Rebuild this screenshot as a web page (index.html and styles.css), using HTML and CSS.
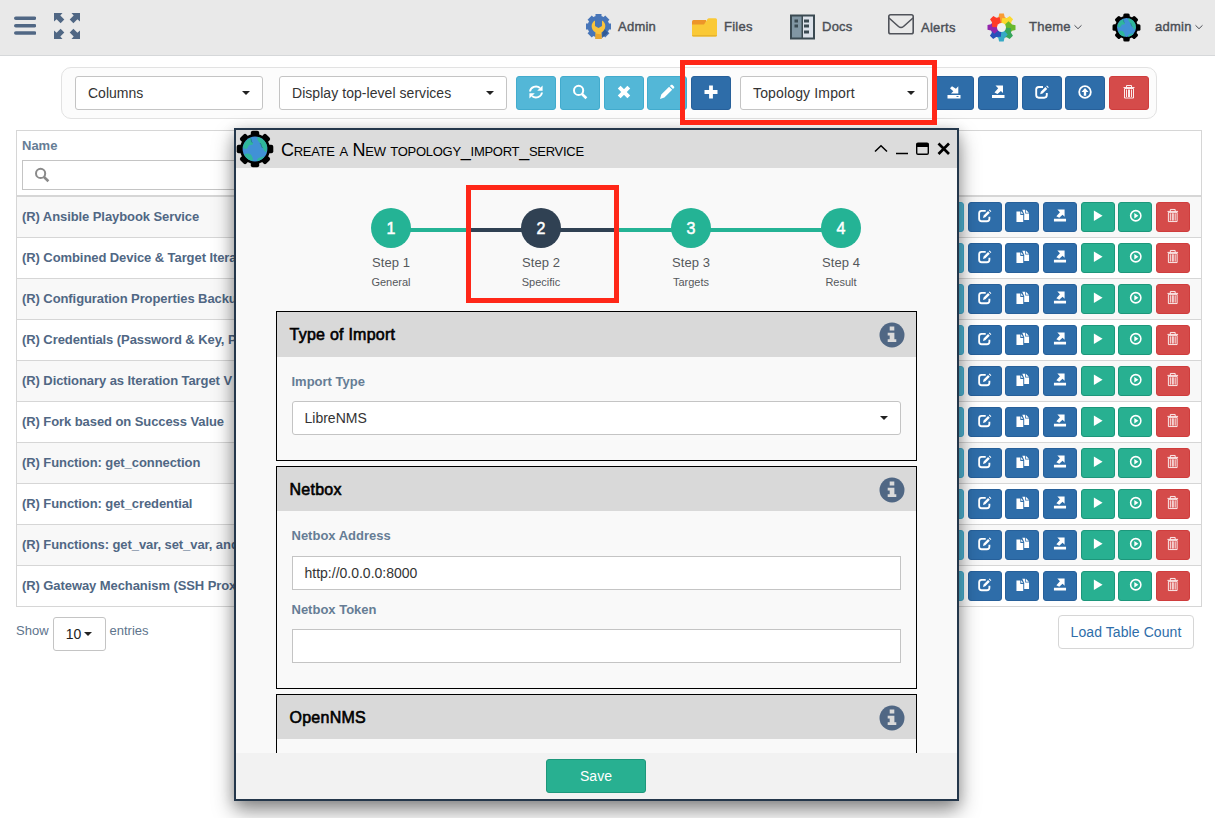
FILE: index.html
```
<!DOCTYPE html>
<html lang="en">
<head>
<meta charset="utf-8">
<title>Services</title>
<link rel="stylesheet" href="styles.css">
</head>
<body>
<svg class="defs" width="0" height="0">
  <symbol id="refresh" viewBox="0 0 16 16"><path d="M2 7.5A6 5.6 0 0 1 12 4M14 8.5A6 5.6 0 0 1 4 12" fill="none" stroke="currentColor" stroke-width="1.9"/><path d="M14.6 1.4v5.4H9.2zM1.4 14.6V9.2h5.4z" fill="currentColor"/></symbol>
  <symbol id="search" viewBox="0 0 16 16"><circle cx="6.6" cy="6.4" r="4.6" fill="none" stroke="currentColor" stroke-width="2"/><path d="M10 10l4.4 4.2" stroke="currentColor" stroke-width="2.6"/></symbol>
  <symbol id="remove" viewBox="0 0 16 16"><path d="M3.2 3.2l9.6 9.6M12.8 3.2l-9.6 9.6" stroke="currentColor" stroke-width="4"/></symbol>
  <symbol id="pencil" viewBox="0 0 16 16"><path d="M1 15l1.3-4.5 7.8-7.8 3.1 3.1-7.8 7.8zM10.9 2l1-1c.6-.5 1.2-.4 1.7 0l1.4 1.4c.5.5.5 1.1 0 1.7l-1 1z" fill="currentColor"/></symbol>
  <symbol id="plus" viewBox="0 0 16 16"><path d="M8 1.5v13M1.500 8h13" stroke="currentColor" stroke-width="3.8"/></symbol>
  <symbol id="import" viewBox="0 0 16 16"><path d="M1.500 11h13v3.500h-13zM12.300 2.300v7.200H5L7.300 7.200 4 4.300 6 2.200 9.900 4.700z" fill="currentColor"/><path d="M10.500 12.500h2" stroke="#2e6da9" stroke-width=".9"/></symbol>
  <symbol id="export" viewBox="0 0 16 16"><path d="M2 11h12.500v3H2zM5.500 1.500h7.500V9L10.900 7 7.500 10 4.500 8.500 8.200 4.300z" fill="currentColor"/></symbol>
  <symbol id="edit" viewBox="0 0 16 16"><path d="M9 3H4.800A2.600 2.600 0 0 0 2.200 5.600v5.500a2.600 2.600 0 0 0 2.600 2.600h5.400a2.600 2.600 0 0 0 2.600-2.600V9" fill="none" stroke="currentColor" stroke-width="1.900"/><path d="M6.200 10.200l.6-2.500 4.600-4.600 1.800 1.800-4.600 4.600zM12.200 2.300l.8-.8 1.800 1.800-.8.800z" fill="currentColor"/></symbol>
  <symbol id="upload" viewBox="0 0 16 16"><circle cx="8" cy="8" r="5.800" fill="none" stroke="currentColor" stroke-width="1.800"/><path d="M8 4l3.500 4H9.200v3.800H6.800V8H4.500z" fill="currentColor"/></symbol>
  <symbol id="trash" viewBox="0 0 16 16"><path d="M3.500 4.500h9v9.500h-9zM2.500 3.500h11M5.500 3.500v-2h5v2M5.500 5.500v7.500M7.500 5.500v7.500M8.500 5.500v7.500M10.500 5.500v7.500" fill="none" stroke="currentColor" stroke-width=".9"/></symbol>
  <symbol id="copy" viewBox="0 0 16 16"><path d="M1.500 3.500h4v3.700h3v7.300h-7zM6.300 3.300l2.200 2.600H6.300zM7.500 1.800h3v4h4v6.500H9.500V6.300zM11.300 1.800l3 3.200h-3z" fill="currentColor"/></symbol>
  <symbol id="play" viewBox="0 0 16 16"><path d="M4 2.500l9 5.500-9 5.500z" fill="currentColor"/></symbol>
  <symbol id="run" viewBox="0 0 16 16"><circle cx="8" cy="8" r="5.300" fill="none" stroke="currentColor" stroke-width="1.600"/><path d="M6.500 5.200L10.700 8l-4.200 2.800z" fill="currentColor"/></symbol>
  <symbol id="info" viewBox="0 0 26 26"><circle cx="13" cy="13" r="12.500" fill="#506784"/><path d="M10.700 4.500h4.600v4h-4.600zM8.700 10.700h6.700v6.600h1.900v2.700H8.700v-2.700h2v-3.900h-2z" fill="#dadada"/></symbol>
  <symbol id="chevron" viewBox="0 0 8 8"><path d="M.5 2.300L4 5.700l3.500-3.400" fill="none" stroke="#4b4f56" stroke-width="1"/></symbol>
  <symbol id="wedge" viewBox="0 0 29 29"><path d="M14.500 14.500L8.300 7.500 11.500 4 12.300.5h4.600L17.700 4l2.800 2z"/></symbol>
  <symbol id="globe" viewBox="0 0 38 38">
    <g fill="#000"><circle cx="19" cy="19" r="15"/><g id="teeth"><rect x="14.800" y=".7" width="8.400" height="6" rx="2"/><rect x="14.800" y="31.300" width="8.400" height="6" rx="2"/><rect x=".7" y="14.800" width="6" height="8.400" rx="2"/><rect x="31.300" y="14.800" width="6" height="8.400" rx="2"/></g><use href="#teeth" transform="rotate(45 19 19)"/></g>
    <circle cx="19" cy="19" r="12.400" fill="#4191d6"/>
    <path d="M8 14c1.500-2.800 4-4.900 6.800-5.900 1 1.500 0 3 1.500 4.200 2 1.500-.5 3-2.300 2.700-2 0-1.500 2.500-3.300 3.700-1.500 1-2.500-.7-3.500-.7 0-1.500.2-2.700.8-4zM21.500 7c4 .7 7 3 8.700 6.500 1 3 1.200 5.500 0 8.500-2.200 0-2.200-3-3.700-4.300-2-1.500-1-3.500-2.800-5-1.500-1.500-3-3-2.200-5.700zM8.200 24.500c2-1.300 4.300-1.500 6.300-.3 1.500 1.300 2.500 3.700 2.500 6.500-4 0-7-2.500-8.800-6.200zM21 31c0-2.500 1.700-3.700 3.500-3.400 1.500 0 2.200-1.300 3.700-.9-1.700 2.300-4 3.900-7.200 4.300z" fill="#2fb79b"/>
    <path d="M14.800 8.500c1 1.500 0 3 1.500 4.200M24 13c1.700 1.500 1 3.500 2.500 5" fill="none" stroke="#1d5c80" stroke-width=".6"/>
  </symbol>
</svg>

<header class="topbar">
  <div class="tools">
    <svg class="menu-icon" viewBox="0 0 22 20"><path d="M1.800 2.200h18.700M1.800 9.700h18.700M1.800 17h18.700" stroke="#506784" stroke-width="3.600" stroke-linecap="round"/></svg>
    <svg class="expand-icon" viewBox="0 0 26 26"><g fill="#506784"><path id="arrow" d="M0 0h8.500L6.300 2.600l4 4-3.700 3.700-4-4L0 8.500z"/><use href="#arrow" transform="matrix(-1 0 0 1 26 0)"/><use href="#arrow" transform="matrix(1 0 0 -1 0 26)"/><use href="#arrow" transform="matrix(-1 0 0 -1 26 26)"/></g></svg>
  </div>
  <nav class="nav">
    <a class="nav-item nav-admin"><svg width="25" height="26" viewBox="0 0 25 26"><g fill="#4775b8"><circle cx="12.500" cy="12.500" r="10.800"/><g id="cog"><path d="M9.500 0h6v25h-6zM0 9.500h25v6H0z"/></g><use href="#cog" transform="rotate(45 12.500 12.500)"/></g><path d="M16 24l6-5-5-6z" fill="#315a95"/><path d="M9 6.500C4.500 9 4.500 15.500 9.500 18.500V25h6v-6.500c5-3 5-9.500.5-12v5.500l-3.500 2L9 12z" fill="#f9c33c"/><path d="M9.500 19.500l6 1V25h-6z" fill="#e9a62e"/></svg><span>Admin</span></a>
    <a class="nav-item nav-files"><svg width="25" height="26" viewBox="0 0 25 26"><path d="M0 7.500Q0 6 1.500 6H14v6H0z" fill="#ed9529"/><path d="M0 10.500h12L15.500 5q.5-.8 1.500-.8h6.500q1.500 0 1.500 1.500V21q0 1.500-1.500 1.500h-22Q0 22.500 0 21z" fill="#fac936"/><path d="M0 21h25q0 1.500-1.500 1.500h-22Q0 22.500 0 21z" fill="#e8b42d"/></svg><span>Files</span></a>
    <a class="nav-item nav-docs"><svg width="25" height="26" viewBox="0 0 25 26"><path d="M0 .5h25v25H0z" fill="#3b4a52"/><path d="M2 2.500h9.500v21H2z" fill="#8196a3"/><path d="M13 2.500h10v21H13z" fill="#dce2ea"/><path d="M4.500 5.500h3.500v3H4.500zM4.500 10.500h3.500v3H4.500zM14 5.500h5v3h-5zM14 10.500h5v3h-5zM14 16.500h5v3h-5z" fill="#3b4a52"/></svg><span>Docs</span></a>
    <a class="nav-item nav-alerts"><svg width="26" height="26" viewBox="0 0 26 26"><rect x=".8" y=".8" width="24.400" height="19" rx="1.800" fill="none" stroke="#50535a" stroke-width="1.600"/><path d="M1 4l9.500 8.500q2.500 2 5 0L25 4" fill="none" stroke="#50535a" stroke-width="1.600"/></svg><span>Alerts</span></a>
    <a class="nav-item nav-theme"><svg width="29" height="29" viewBox="0 0 29 29"><use href="#wedge" fill="#f99b32"/><use href="#wedge" transform="rotate(45 14.500 14.500)" fill="#fbd92e"/><use href="#wedge" transform="rotate(90 14.500 14.500)" fill="#69b82d"/><use href="#wedge" transform="rotate(135 14.500 14.500)" fill="#37a55b"/><use href="#wedge" transform="rotate(180 14.500 14.500)" fill="#36a9c6"/><use href="#wedge" transform="rotate(225 14.500 14.500)" fill="#2851b9"/><use href="#wedge" transform="rotate(270 14.500 14.500)" fill="#9326ac"/><use href="#wedge" transform="rotate(315 14.500 14.500)" fill="#ff3b28"/><circle cx="14.500" cy="14.500" r="4.500" fill="#f0f1f1"/></svg><span>Theme</span><svg class="chev"><use href="#chevron"/></svg></a>
    <a class="nav-item nav-user"><svg width="29" height="29"><use href="#globe"/></svg><span>admin</span><svg class="chev"><use href="#chevron"/></svg></a>
  </nav>
</header>

<main class="content">
  <section class="toolbar">
    <div class="select w188">Columns</div>
    <div class="select w228">Display top-level services</div>
    <div class="buttons">
      <button class="btn info"><svg><use href="#refresh"/></svg></button>
      <button class="btn info"><svg><use href="#search"/></svg></button>
      <button class="btn info"><svg><use href="#remove"/></svg></button>
      <button class="btn info"><svg><use href="#pencil"/></svg></button>
      <button class="btn primary"><svg><use href="#plus"/></svg></button>
    </div>
    <div class="select w188 service-type">Topology Import</div>
    <div class="buttons">
      <button class="btn primary"><svg><use href="#import"/></svg></button>
      <button class="btn primary"><svg><use href="#export"/></svg></button>
      <button class="btn primary"><svg><use href="#edit"/></svg></button>
      <button class="btn primary"><svg><use href="#upload"/></svg></button>
      <button class="btn danger"><svg><use href="#trash"/></svg></button>
    </div>
  </section>

  <section class="table">
    <div class="thead"><div class="th">Name</div><div class="filter"><svg width="16" height="16"><use href="#search"/></svg></div></div>
    <div class="row"><span class="name">(R) Ansible Playbook Service</span><span class="actions"><i class="btn info"></i><i class="btn primary"><svg><use href="#edit"/></svg></i><i class="btn primary"><svg><use href="#copy"/></svg></i><i class="btn primary"><svg><use href="#export"/></svg></i><i class="btn success"><svg><use href="#play"/></svg></i><i class="btn success"><svg><use href="#run"/></svg></i><i class="btn danger"><svg><use href="#trash"/></svg></i></span></div>
    <div class="row"><span class="name">(R) Combined Device &amp; Target Itera</span><span class="actions"><i class="btn info"></i><i class="btn primary"><svg><use href="#edit"/></svg></i><i class="btn primary"><svg><use href="#copy"/></svg></i><i class="btn primary"><svg><use href="#export"/></svg></i><i class="btn success"><svg><use href="#play"/></svg></i><i class="btn success"><svg><use href="#run"/></svg></i><i class="btn danger"><svg><use href="#trash"/></svg></i></span></div>
    <div class="row"><span class="name">(R) Configuration Properties Backu</span><span class="actions"><i class="btn info"></i><i class="btn primary"><svg><use href="#edit"/></svg></i><i class="btn primary"><svg><use href="#copy"/></svg></i><i class="btn primary"><svg><use href="#export"/></svg></i><i class="btn success"><svg><use href="#play"/></svg></i><i class="btn success"><svg><use href="#run"/></svg></i><i class="btn danger"><svg><use href="#trash"/></svg></i></span></div>
    <div class="row"><span class="name">(R) Credentials (Password &amp; Key, P</span><span class="actions"><i class="btn info"></i><i class="btn primary"><svg><use href="#edit"/></svg></i><i class="btn primary"><svg><use href="#copy"/></svg></i><i class="btn primary"><svg><use href="#export"/></svg></i><i class="btn success"><svg><use href="#play"/></svg></i><i class="btn success"><svg><use href="#run"/></svg></i><i class="btn danger"><svg><use href="#trash"/></svg></i></span></div>
    <div class="row"><span class="name">(R) Dictionary as Iteration Target V</span><span class="actions"><i class="btn info"></i><i class="btn primary"><svg><use href="#edit"/></svg></i><i class="btn primary"><svg><use href="#copy"/></svg></i><i class="btn primary"><svg><use href="#export"/></svg></i><i class="btn success"><svg><use href="#play"/></svg></i><i class="btn success"><svg><use href="#run"/></svg></i><i class="btn danger"><svg><use href="#trash"/></svg></i></span></div>
    <div class="row"><span class="name">(R) Fork based on Success Value</span><span class="actions"><i class="btn info"></i><i class="btn primary"><svg><use href="#edit"/></svg></i><i class="btn primary"><svg><use href="#copy"/></svg></i><i class="btn primary"><svg><use href="#export"/></svg></i><i class="btn success"><svg><use href="#play"/></svg></i><i class="btn success"><svg><use href="#run"/></svg></i><i class="btn danger"><svg><use href="#trash"/></svg></i></span></div>
    <div class="row"><span class="name">(R) Function: get_connection</span><span class="actions"><i class="btn info"></i><i class="btn primary"><svg><use href="#edit"/></svg></i><i class="btn primary"><svg><use href="#copy"/></svg></i><i class="btn primary"><svg><use href="#export"/></svg></i><i class="btn success"><svg><use href="#play"/></svg></i><i class="btn success"><svg><use href="#run"/></svg></i><i class="btn danger"><svg><use href="#trash"/></svg></i></span></div>
    <div class="row"><span class="name">(R) Function: get_credential</span><span class="actions"><i class="btn info"></i><i class="btn primary"><svg><use href="#edit"/></svg></i><i class="btn primary"><svg><use href="#copy"/></svg></i><i class="btn primary"><svg><use href="#export"/></svg></i><i class="btn success"><svg><use href="#play"/></svg></i><i class="btn success"><svg><use href="#run"/></svg></i><i class="btn danger"><svg><use href="#trash"/></svg></i></span></div>
    <div class="row"><span class="name">(R) Functions: get_var, set_var, and</span><span class="actions"><i class="btn info"></i><i class="btn primary"><svg><use href="#edit"/></svg></i><i class="btn primary"><svg><use href="#copy"/></svg></i><i class="btn primary"><svg><use href="#export"/></svg></i><i class="btn success"><svg><use href="#play"/></svg></i><i class="btn success"><svg><use href="#run"/></svg></i><i class="btn danger"><svg><use href="#trash"/></svg></i></span></div>
    <div class="row"><span class="name">(R) Gateway Mechanism (SSH Prox</span><span class="actions"><i class="btn info"></i><i class="btn primary"><svg><use href="#edit"/></svg></i><i class="btn primary"><svg><use href="#copy"/></svg></i><i class="btn primary"><svg><use href="#export"/></svg></i><i class="btn success"><svg><use href="#play"/></svg></i><i class="btn success"><svg><use href="#run"/></svg></i><i class="btn danger"><svg><use href="#trash"/></svg></i></span></div>
  </section>

  <section class="table-footer">
    <div class="length"><span>Show</span><span class="length-select">10</span><span>entries</span></div>
    <button class="load">Load Table Count</button>
  </section>
</main>

<div class="modal">
  <div class="modal-head">
    <svg class="logo" width="38" height="38"><use href="#globe"/></svg>
    <h1>Create a New topology_import_service</h1>
    <svg class="controls" viewBox="0 0 78 16"><path d="M1 10.500l6-5.800 6 5.800" fill="none" stroke="#000" stroke-width="1.500"/><path d="M22 12.500h12" stroke="#000" stroke-width="1.500"/><rect x="42.700" y="2.200" width="11.600" height="11" rx="1.300" fill="none" stroke="#000" stroke-width="1.400"/><path d="M42.500 2.500h12v3.500h-12z"/><path d="M64.500 2.500l10.500 10.500M75 2.500L64.500 13" stroke="#000" stroke-width="2.700"/></svg>
  </div>
  <div class="modal-body">
    <ol class="steps">
      <li><b>1</b><span>Step 1</span><small>General</small></li>
      <li class="active"><b>2</b><span>Step 2</span><small>Specific</small></li>
      <li><b>3</b><span>Step 3</span><small>Targets</small></li>
      <li><b>4</b><span>Step 4</span><small>Result</small></li>
    </ol>
    <section class="panel type">
      <h2>Type of Import<svg><use href="#info"/></svg></h2>
      <div class="fields"><label>Import Type</label><div class="select">LibreNMS</div></div>
    </section>
    <section class="panel netbox">
      <h2>Netbox<svg><use href="#info"/></svg></h2>
      <div class="fields"><label>Netbox Address</label><div class="input">http://0.0.0.0:8000</div><label>Netbox Token</label><div class="input"></div></div>
    </section>
    <section class="panel opennms">
      <h2>OpenNMS<svg><use href="#info"/></svg></h2>
    </section>
  </div>
  <div class="modal-foot"><button class="btn success save">Save</button></div>
</div>
<div class="mark mark-type"></div>
<div class="mark mark-step"></div>
</body>
</html>
```
FILE: styles.css
```
* { box-sizing: border-box; }
body { margin: 0; width: 1215px; height: 818px; overflow: hidden; background: #fff; font: 13px/18px "Liberation Sans", Arial, sans-serif; color: #5e748c; }
.defs { position: absolute; }
button { font: inherit; padding: 0; }

.topbar { display: flex; justify-content: space-between; height: 56px; background: #e9e9e9; border-bottom: 1px solid #d6d8da; }
.tools { display: flex; padding: 13px 0 0 14px; gap: 18px; }
.menu-icon { width: 22px; height: 20px; margin-top: 3px; }
.expand-icon { width: 26px; height: 26px; }
.nav { display: flex; height: 54px; }
.nav-item { display: flex; align-items: center; gap: 7px; color: #4b4f56; font-size: 13px; letter-spacing: .25px; -webkit-text-stroke: .4px #4b4f56; }
.nav-item svg { flex: none; }
.nav-admin { width: 106px; }
.nav-files, .nav-docs { width: 98px; }
.nav-alerts { width: 99px; }
.nav-theme { width: 125px; }
.nav-user { width: 103px; }
.nav-alerts > span { margin-top: 1px; }
.nav-theme > span { margin-left: 6px; width: 40px; }
.nav-user > span { margin-left: 7px; width: 35px; }
.nav-theme .chev, .nav-user .chev { margin-left: -2px; }
.chev { width: 8px; height: 8px; }

.toolbar { display: flex; width: 1096px; height: 52px; margin: 11px 0 0 61px; padding: 8px 7px 8px 13px; background: #fcfcfc; border: 1px solid #e2e2e2; border-radius: 10px; }
.select, .input { height: 34px; border: 1px solid #c4c4c4; background: #fff; color: #333; font-size: 14px; line-height: 32px; padding: 0 12px; white-space: nowrap; }
.select { display: flex; justify-content: space-between; align-items: center; border-radius: 3px; }
.select::after, .length-select::after { content: ""; border: 4px solid transparent; border-top-color: #222; border-bottom: 0; }
.w188 { width: 188px; }
.w228 { width: 228px; margin: 0 9px 0 16px; letter-spacing: .05px; }
.service-type { margin: 0 6px 0 9px; letter-spacing: .15px; }
.buttons { display: flex; gap: 3.75px; }
.btn { display: flex; align-items: center; justify-content: center; width: 40px; height: 34px; border: 1px solid; border-radius: 3px; color: #fff; }
.btn svg { width: 16px; height: 16px; margin-top: -2px; }
.info { background: #53b7d7; border-color: #42abcd; }
.primary { background: #2e6da9; border-color: #27609a; }
.success { background: #28b091; border-color: #1d977b; }
.danger { background: #d54b4a; border-color: #cf3d3d; }

.table { width: 1186px; height: 477px; margin: 11px 0 0 16px; border: 1px solid #d6d6d6; }
.thead { height: 66px; border-bottom: 2px solid #d6d6d6; padding: 6px 5px; }
.th { height: 23px; font-weight: bold; color: #667d95; }
.filter { display: flex; align-items: center; width: 260px; height: 30px; padding: 0 11px; border: 1px solid #c4c4c4; color: #8a8a8a; }
.row { display: flex; justify-content: space-between; align-items: center; height: 41px; padding: 0 11px 0 5px; border-bottom: 1px solid #d6d6d6; }
.row:nth-child(even) { background: #f8f8f8; }
.row:last-child { height: 40px; border-bottom: 0; }
.name { font-weight: bold; color: #506784; white-space: nowrap; letter-spacing: -.08px; }
.actions { display: flex; gap: 3.65px; }
.actions .btn { width: 34px; height: 30px; }
.actions .btn svg { width: 15.5px; height: 15.5px; }

.table-footer { display: flex; justify-content: space-between; padding: 8px 21px 0 16px; }
.length { display: flex; gap: 4px; padding-top: 2px; line-height: 27px; }
.length-select { display: flex; align-items: center; justify-content: center; gap: 3px; width: 53px; height: 34px; border: 1px solid #c4c4c4; border-radius: 3px; color: #222; font-size: 14px; }
.load { width: 136px; height: 34px; border: 1px solid #d6d6d6; border-radius: 4px; background: #fff; color: #2e6da9; font-size: 14px; letter-spacing: .08px; }

.modal { position: absolute; left: 234px; top: 128px; width: 725px; height: 673px; display: flex; flex-direction: column; border: 2px solid #24374b; background: #f9f9f9; box-shadow: 0 10px 20px rgba(0,0,0,.4), 0 3px 12px rgba(0,0,0,.18); }
.modal-head { display: flex; align-items: center; height: 38px; background: #dcdcdc; }
.modal-head h1 { flex: 1; margin: 2px 0 0 7px; font-size: 18px; font-weight: 400; font-variant: small-caps; color: #000; line-height: 22px; letter-spacing: -.28px; }
.controls { width: 78px; height: 16px; margin-right: 5px; }
.modal-body { height: 585px; padding: 0 40px; overflow: hidden; }
.steps { display: flex; list-style: none; height: 143px; margin: 0; padding: 40px 0 0 40px; }
.steps li { display: flex; flex-direction: column; align-items: center; width: 150px; color: #55585c; background: linear-gradient(#24b395, #24b395) 0 20px / 100% 4px no-repeat; }
.steps li:first-child { background-position: 75px 20px; }
.steps li:last-child { background-size: 75px 4px; }
.steps .active { background-image: linear-gradient(#304153, #304153); }
.steps b { width: 40px; height: 40px; border-radius: 50%; background: #24b395; color: #fff; font-size: 16px; line-height: 41px; text-align: center; font-weight: 400; -webkit-text-stroke: .5px #fff; }
.steps .active b { background: #304153; }
.steps span { margin-top: 6px; letter-spacing: .05px; }
.steps small { margin-top: 1px; font-size: 11px; }
.panel { width: 641px; margin-bottom: 5px; border: 1px solid #000; }
.type { height: 150px; }
.netbox { height: 223px; }
.opennms { height: 150px; }
.panel h2 { display: flex; align-items: center; justify-content: space-between; height: 45px; margin: 0; padding: 0 11px 0 12.5px; background: #d9d9d9; color: #000; font-size: 16px; font-weight: 400; letter-spacing: .25px; -webkit-text-stroke: .6px #000; }
.netbox h2, .opennms h2 { height: 44px; padding-top: 1px; }
.panel h2 svg { width: 26px; height: 26px; margin-top: 1px; }
.fields { padding: 16px 15px; }
.fields label { display: block; height: 28px; font-weight: bold; color: #667d95; margin-left: -.5px; }
.fields .input, .fields .select { padding-left: 11.5px; }
.netbox .fields label { height: 29px; }
.netbox .fields .input + label { height: 39px; padding-top: 11px; }
.modal-foot { display: flex; justify-content: center; height: 46px; padding: 6px 1px 0 0; background: #f2f2f2; }
.save { width: 100px; font-size: 14px; }

.mark { position: absolute; border: 5px solid #ff2718; }
.mark-type { left: 680px; top: 60px; width: 257px; height: 65px; }
.mark-step { left: 466px; top: 185px; width: 153px; height: 118px; }
```
